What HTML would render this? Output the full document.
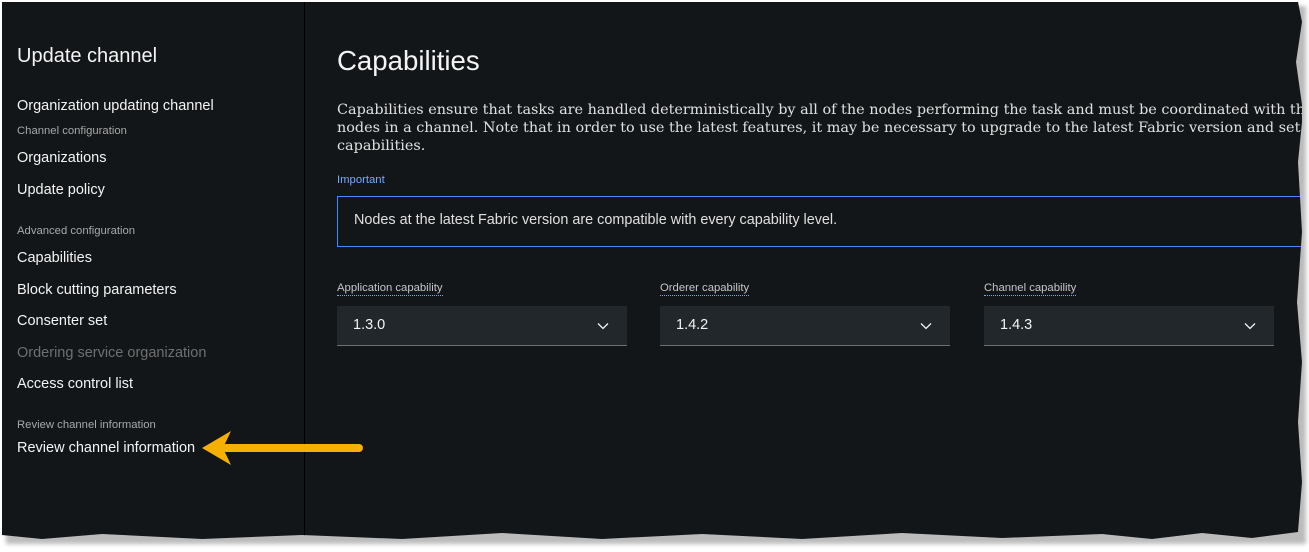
<!DOCTYPE html>
<html><head><meta charset="utf-8">
<style>
*{margin:0;padding:0;box-sizing:border-box}
html,body{width:1309px;height:552px;overflow:hidden;background:#fff;position:relative;font-family:"Liberation Sans",sans-serif}
#frame{position:absolute;left:2px;top:2px;width:1300px;height:538px;background:#121619;
clip-path:polygon(0 0,1296px 0,1300px 20px,1294px 60px,1301px 110px,1296px 160px,1300px 230px,1295px 300px,1300px 360px,1296px 420px,1300px 480px,1296px 530px,1250px 536px,1200px 531px,1150px 537px,1100px 532px,1000px 536px,900px 531px,800px 537px,700px 532px,600px 537px,500px 531px,400px 537px,300px 533px,200px 537px,100px 532px,40px 537px,0 533px);
overflow:hidden}
#shadow{position:absolute;left:6px;top:6px;width:1300px;height:538px;background:#bbb;filter:blur(2px)}
.sep{position:absolute;left:302px;top:0;width:1px;height:100%;background:#000}
.t{position:absolute;white-space:nowrap}
.nav{color:#f4f4f4;font-size:14.5px}
.sub{color:#a8a8a8;font-size:11.3px}
.dis{color:#6f6f6f;font-size:14.5px}
.lbl{color:#c6c6c6;font-size:11.3px;border-bottom:1px dotted #78a9ff;padding-bottom:1px}
.sel{position:absolute;top:304px;height:40px;background:#21272a;border-bottom:1px solid #6f6f6f}
.sel span{position:absolute;left:16px;top:11px;color:#f4f4f4;font-size:14.5px}
.sel svg{position:absolute;right:18px;top:16px}
</style></head><body>
<div id="shadow"></div>
<div id="frame">
<div class="sep"></div>
<div class="t" style="left:15px;top:43px;color:#f4f4f4;font-size:20px">Update channel</div>
<div class="t nav" style="left:15px;top:96px">Organization updating channel</div>
<div class="t sub" style="left:15px;top:123px">Channel configuration</div>
<div class="t nav" style="left:15px;top:148px">Organizations</div>
<div class="t nav" style="left:15px;top:180px">Update policy</div>
<div class="t sub" style="left:15px;top:223px">Advanced configuration</div>
<div class="t nav" style="left:15px;top:248px">Capabilities</div>
<div class="t nav" style="left:15px;top:280px">Block cutting parameters</div>
<div class="t nav" style="left:15px;top:311px">Consenter set</div>
<div class="t dis" style="left:15px;top:343px">Ordering service organization</div>
<div class="t nav" style="left:15px;top:374px">Access control list</div>
<div class="t sub" style="left:15px;top:417px">Review channel information</div>
<div class="t nav" style="left:15px;top:438px">Review channel information</div>

<div class="t" style="left:335px;top:43px;color:#f4f4f4;font-size:27.6px">Capabilities</div>
<div class="t" style="left:335px;top:99px;color:#e0e0e0;font-family:'DejaVu Serif',serif;font-size:14.4px;line-height:18px;width:965px;overflow:hidden">Capabilities ensure that tasks are handled deterministically by all of the nodes performing the task and must be coordinated with the other<br>nodes in a channel. Note that in order to use the latest features, it may be necessary to upgrade to the latest Fabric version and set the<br>capabilities.</div>
<div class="t" style="left:335px;top:172px;color:#78a9ff;font-size:11.3px">Important</div>
<div style="position:absolute;left:335px;top:194px;width:980px;height:51px;border:1px solid #4589ff"></div>
<div class="t" style="left:352px;top:210px;color:#e0e0e0;font-size:14.4px">Nodes at the latest Fabric version are compatible with every capability level.</div>

<div class="t lbl" style="left:335px;top:280px">Application capability</div>
<div class="t lbl" style="left:658px;top:280px">Orderer capability</div>
<div class="t lbl" style="left:982px;top:280px">Channel capability</div>
<div class="sel" style="left:335px;width:290px"><span>1.3.0</span><svg width="12" height="8" viewBox="0 0 12 8"><path d="M1 1.5l5 5 5-5" stroke="#f4f4f4" stroke-width="1.3" fill="none"/></svg></div>
<div class="sel" style="left:658px;width:290px"><span>1.4.2</span><svg width="12" height="8" viewBox="0 0 12 8"><path d="M1 1.5l5 5 5-5" stroke="#f4f4f4" stroke-width="1.3" fill="none"/></svg></div>
<div class="sel" style="left:982px;width:290px"><span>1.4.3</span><svg width="12" height="8" viewBox="0 0 12 8"><path d="M1 1.5l5 5 5-5" stroke="#f4f4f4" stroke-width="1.3" fill="none"/></svg></div>
</div>
<svg style="position:absolute;left:0;top:0" width="1309" height="552">
<path d="M226 448 L359 448" stroke="#f6b000" stroke-width="8" stroke-linecap="round"/>
<path d="M202 448 L231 431 L223 448 L231 465 Z" fill="#f6b000"/>
</svg>
</body></html>
